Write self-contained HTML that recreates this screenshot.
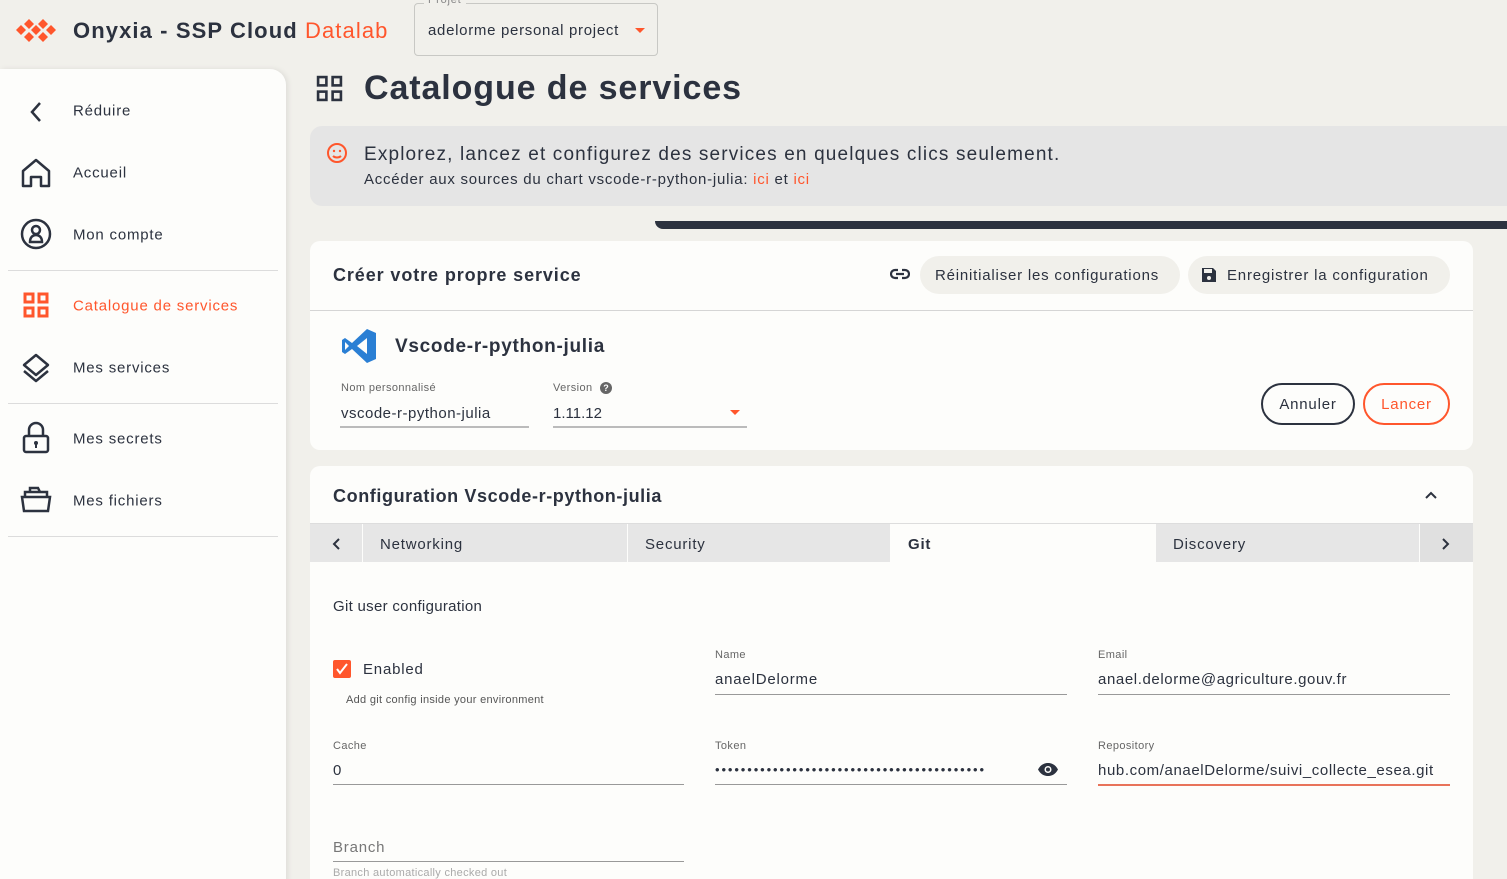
<!DOCTYPE html>
<html><head><meta charset="utf-8"><style>
*{margin:0;padding:0;box-sizing:border-box}
html,body{width:1507px;height:879px;overflow:hidden}
body{background:#f1f0eb;font-family:"Liberation Sans",sans-serif;color:#2c323f;position:relative;letter-spacing:0.8px}
.a{position:absolute;white-space:nowrap}
.side{position:absolute;left:0;top:69px;width:286px;height:830px;background:#fdfdfb;border-radius:0 16px 0 0;box-shadow:2px 0 6px rgba(0,0,0,.08)}
.it{position:absolute;left:73px;font-size:15px;transform:translateY(-45%)}
.ic{position:absolute;left:20px}
.hr{position:absolute;left:8px;width:270px;height:1px;background:#dcdcdc}
.card{position:absolute;left:310px;width:1163px;background:#fdfdfb;border-radius:10px}
.lbl{position:absolute;font-size:11px;color:#666;margin-top:1px;letter-spacing:0.4px}
.val{position:absolute;font-size:15px;margin-top:2px}
.ul{position:absolute;height:1px;background:#999}
.tab{position:absolute;top:524px;height:38px;background:#e6e6e6;font-size:15px;padding:12px 0 0 17px}
.pill{position:absolute;top:256px;height:38px;border-radius:19px;background:#f1f0eb;font-size:15px;padding:11px 0 0 15px}
</style></head><body>
<svg class="a" style="left:14px;top:17px" width="44" height="28" viewBox="0 0 44 28"><g fill="#ff562c"><path d="M7 8l5 5-5 5-5-5z"/><path d="M15 2l5 5-5 5-5-5z"/><path d="M15 15l5 5-5 5-5-5z"/><path d="M22 8l5 5-5 5-5-5z"/><path d="M29 2l5 5-5 5-5-5z"/><path d="M29 15l5 5-5 5-5-5z"/><path d="M37 8l5 5-5 5-5-5z"/></g></svg>
<div class="a" style="left:73px;top:18px;font-size:22px;font-weight:bold;letter-spacing:1.1px">Onyxia - SSP Cloud <span style="color:#ff562c;font-weight:normal">Datalab</span></div>
<div class="a" style="left:414px;top:3px;width:244px;height:53px;border:1px solid #c8c8c4;border-radius:4px"></div>
<div class="a" style="left:424px;top:-6px;font-size:11px;color:#888;background:#f1f0eb;padding:0 4px">Projet</div>
<div class="a" style="left:428px;top:22px;font-size:15px;letter-spacing:0.7px">adelorme personal project</div>
<div class="a" style="left:635px;top:28px;border:5px solid transparent;border-top-color:#ff562c;border-bottom:0"></div>

<div class="side">
<svg class="ic" style="left:28px;top:32px" width="16" height="22" viewBox="0 0 16 22"><path d="M12 2L4 11l8 9" fill="none" stroke="#2c323f" stroke-width="2.5"/></svg>
<div class="it" style="top:41px">Réduire</div>
<svg class="ic" style="top:88px" width="32" height="32" viewBox="0 0 32 32"><path d="M3 14L16 3l13 11v15h-8v-9h-10v9H3z" fill="none" stroke="#2c323f" stroke-width="2.5" stroke-linejoin="round"/></svg>
<div class="it" style="top:103px">Accueil</div>
<svg class="ic" style="top:149px" width="32" height="32" viewBox="0 0 32 32"><circle cx="16" cy="16" r="14" fill="none" stroke="#2c323f" stroke-width="2.5"/><circle cx="16" cy="12" r="4" fill="none" stroke="#2c323f" stroke-width="2.5"/><path d="M10 24c0-5 3-7 6-7s6 2 6 7z" fill="none" stroke="#2c323f" stroke-width="2.5"/></svg>
<div class="it" style="top:165px">Mon compte</div>
<div class="hr" style="top:201px"></div>
<svg class="ic" style="left:23px;top:223px" width="26" height="26" viewBox="0 0 26 26"><g fill="none" stroke="#ff562c" stroke-width="3"><rect x="2" y="2" width="8" height="8"/><rect x="16" y="2" width="8" height="8"/><rect x="2" y="16" width="8" height="8"/><rect x="16" y="16" width="8" height="8"/></g></svg>
<div class="it" style="top:236px;color:#ff562c">Catalogue de services</div>
<svg class="ic" style="top:283px" width="32" height="32" viewBox="0 0 32 32"><g fill="none" stroke="#2c323f" stroke-width="2.5" stroke-linejoin="round"><path d="M16 3l12 10-12 10L4 13z"/><path d="M4 19l12 10 12-10"/></g></svg>
<div class="it" style="top:298px">Mes services</div>
<div class="hr" style="top:334px"></div>
<svg class="ic" style="top:352px" width="32" height="34" viewBox="0 0 32 34"><g fill="none" stroke="#2c323f" stroke-width="2.5"><path d="M9 15V9a7 7 0 0114 0v6"/><rect x="4" y="15" width="24" height="16" rx="2"/></g><circle cx="16" cy="22" r="2" fill="#2c323f"/><rect x="15" y="22" width="2" height="5" fill="#2c323f"/></svg>
<div class="it" style="top:369px">Mes secrets</div>
<svg class="ic" style="top:416px" width="32" height="28" viewBox="0 0 32 28"><g fill="none" stroke="#2c323f" stroke-width="2.5"><path d="M2 12h28l-2 14H4z"/><path d="M5 12V7h22v5"/><path d="M10 7V3h8l2 4"/></g></svg>
<div class="it" style="top:431px">Mes fichiers</div>
<div class="hr" style="top:467px"></div>
</div>

<svg class="a" style="left:316px;top:75px" width="27" height="27" viewBox="0 0 26 26"><g fill="none" stroke="#2c323f" stroke-width="2.5"><rect x="2" y="2" width="8" height="8"/><rect x="16" y="2" width="8" height="8"/><rect x="2" y="16" width="8" height="8"/><rect x="16" y="16" width="8" height="8"/></g></svg>
<div class="a" style="left:364px;top:69px;font-size:34px;font-weight:bold;letter-spacing:0.9px">Catalogue de services</div>

<div class="a" style="left:310px;top:126px;width:1210px;height:80px;background:#e5e5e5;border-radius:12px"></div>
<svg class="a" style="left:326px;top:142px" width="22" height="22" viewBox="0 0 22 22"><g fill="none" stroke="#ff562c" stroke-width="2"><circle cx="11" cy="11" r="9"/><path d="M7 14c2 2 6 2 8 0"/></g><circle cx="8" cy="9" r="1.2" fill="#ff562c"/><circle cx="14" cy="9" r="1.2" fill="#ff562c"/></svg>
<div class="a" style="left:364px;top:144px;font-size:19px;letter-spacing:1.15px">Explorez, lancez et configurez des services en quelques clics seulement.</div>
<div class="a" style="left:364px;top:171px;font-size:15px;letter-spacing:0.75px">Accéder aux sources du chart vscode-r-python-julia: <span style="color:#ff562c">ici</span> et <span style="color:#ff562c">ici</span></div>
<div class="a" style="left:655px;top:221px;width:860px;height:8px;background:#2c323f;border-radius:0 0 0 20px"></div>

<div class="card" style="top:241px;height:209px"></div>
<div class="a" style="left:333px;top:265px;font-size:18px;font-weight:bold;letter-spacing:0.9px">Créer votre propre service</div>
<svg class="a" style="left:890px;top:267px" width="20" height="14" viewBox="0 0 20 14"><g fill="none" stroke="#2c323f" stroke-width="2.2"><path d="M8 3H5a4 4 0 000 8h3M12 3h3a4 4 0 010 8h-3M6 7h8"/></g></svg>
<div class="pill" style="left:920px;width:260px">Réinitialiser les configurations</div>
<div class="pill" style="left:1188px;width:262px;padding-left:39px">Enregistrer la configuration</div>
<svg class="a" style="left:1201px;top:267px" width="16" height="16" viewBox="0 0 16 16"><path d="M1 1h11l3 3v11H1z" fill="#2c323f"/><rect x="3" y="2" width="8" height="4" fill="#f1f0eb"/><circle cx="8" cy="11" r="2" fill="#f1f0eb"/></svg>
<div class="a" style="left:310px;top:310px;width:1163px;height:1px;background:#d5d5d5"></div>
<svg class="a" style="left:340px;top:327px" width="38" height="38" viewBox="0 0 38 38"><path d="M27 2l9 4v26l-9 4L12 22l-7 5-3-2V13l3-2 7 5z" fill="#2a7fd4"/><path d="M27 11v16l-10-8z" fill="#fdfdfb"/><path d="M5 15l4 4-4 4z" fill="#fdfdfb"/></svg>
<div class="a" style="left:395px;top:336px;font-size:19px;font-weight:bold;letter-spacing:0.7px">Vscode-r-python-julia</div>
<div class="lbl" style="left:341px;top:381px">Nom personnalisé</div>
<div class="val" style="left:341px;top:403px;letter-spacing:0.5px">vscode-r-python-julia</div>
<div class="ul" style="left:340px;top:426px;width:189px;background:#bbb;height:2px"></div>
<div class="lbl" style="left:553px;top:381px">Version</div>
<div class="a" style="left:600px;top:382px;width:12px;height:12px;border-radius:50%;background:#666;color:#fff;font-size:9px;text-align:center;line-height:12px;font-weight:bold;letter-spacing:0">?</div>
<div class="val" style="left:553px;top:403px;letter-spacing:0">1.11.12</div>
<div class="a" style="left:730px;top:410px;border:5px solid transparent;border-top-color:#ff562c;border-bottom:0"></div>
<div class="ul" style="left:553px;top:426px;width:194px;background:#bbb;height:2px"></div>
<div class="a" style="left:1261px;top:383px;width:94px;height:42px;border:2px solid #2c323f;border-radius:21px;font-size:15px;text-align:center;line-height:40px">Annuler</div>
<div class="a" style="left:1363px;top:383px;width:87px;height:42px;border:2px solid #ff562c;border-radius:21px;font-size:15px;text-align:center;line-height:40px;color:#ff562c">Lancer</div>

<div class="card" style="top:466px;height:440px"></div>
<div class="a" style="left:333px;top:486px;font-size:18px;font-weight:bold;letter-spacing:0.6px">Configuration Vscode-r-python-julia</div>
<svg class="a" style="left:1424px;top:490px" width="14" height="10" viewBox="0 0 14 10"><path d="M2 8l5-5 5 5" fill="none" stroke="#2c323f" stroke-width="2"/></svg>
<div class="a" style="left:310px;top:523px;width:1163px;height:1px;background:#ddd"></div>
<div class="tab" style="left:310px;width:52px"></div>
<svg class="a" style="left:331px;top:537px" width="10" height="14" viewBox="0 0 10 14"><path d="M8 2L3 7l5 5" fill="none" stroke="#2c323f" stroke-width="2"/></svg>
<div class="tab" style="left:363px;width:264px">Networking</div>
<div class="tab" style="left:628px;width:262px">Security</div>
<div class="tab" style="left:891px;width:264px;background:#fdfdfb;font-weight:bold">Git</div>
<div class="tab" style="left:1156px;width:263px">Discovery</div>
<div class="tab" style="left:1420px;width:53px;background:#e0e0e0"></div>
<svg class="a" style="left:1441px;top:537px" width="10" height="14" viewBox="0 0 10 14"><path d="M2 2l5 5-5 5" fill="none" stroke="#2c323f" stroke-width="2"/></svg>

<div class="a" style="left:333px;top:598px;font-size:15px;letter-spacing:0.3px">Git user configuration</div>
<div class="a" style="left:333px;top:660px;width:18px;height:18px;background:#ff562c;border-radius:2px"></div>
<svg class="a" style="left:335px;top:662px" width="14" height="14" viewBox="0 0 14 14"><path d="M2 7l3 4 7-9" fill="none" stroke="#fff" stroke-width="2"/></svg>
<div class="a" style="left:363px;top:661px;font-size:15px">Enabled</div>
<div class="a" style="left:346px;top:694px;font-size:11px;color:#555;letter-spacing:0.3px">Add git config inside your environment</div>

<div class="lbl" style="left:715px;top:648px">Name</div>
<div class="val" style="left:715px;top:669px">anaelDelorme</div>
<div class="ul" style="left:715px;top:694px;width:352px"></div>
<div class="lbl" style="left:1098px;top:648px">Email</div>
<div class="val" style="left:1098px;top:669px;letter-spacing:0.6px">anael.delorme@agriculture.gouv.fr</div>
<div class="ul" style="left:1098px;top:694px;width:352px"></div>

<div class="lbl" style="left:333px;top:739px">Cache</div>
<div class="val" style="left:333px;top:760px">0</div>
<div class="ul" style="left:333px;top:784px;width:351px"></div>
<div class="lbl" style="left:715px;top:739px">Token</div>
<div class="val" style="left:715px;top:760px;font-size:13px;letter-spacing:1.9px">••••••••••••••••••••••••••••••••••••••••••</div>
<svg class="a" style="left:1037px;top:762px" width="22" height="15" viewBox="0 0 22 15"><path d="M1 7.5C4 2 8 1 11 1s7 1 10 6.5C18 13 14 14 11 14S4 13 1 7.5z" fill="#2c323f"/><circle cx="11" cy="7.5" r="3.5" fill="#fdfdfb"/><circle cx="11" cy="7.5" r="2" fill="#2c323f"/></svg>
<div class="ul" style="left:715px;top:784px;width:352px"></div>
<div class="lbl" style="left:1098px;top:739px">Repository</div>
<div class="val" style="left:1098px;top:760px;letter-spacing:0.6px">hub.com/anaelDelorme/suivi_collecte_esea.git</div>
<div class="ul" style="left:1098px;top:784px;width:352px;height:2px;background:#e8735a"></div>

<div class="val" style="left:333px;top:837px;color:#777">Branch</div>
<div class="ul" style="left:333px;top:861px;width:351px"></div>
<div class="a" style="left:333px;top:867px;font-size:11px;color:#aaa;letter-spacing:0.3px">Branch automatically checked out</div>
</body></html>
